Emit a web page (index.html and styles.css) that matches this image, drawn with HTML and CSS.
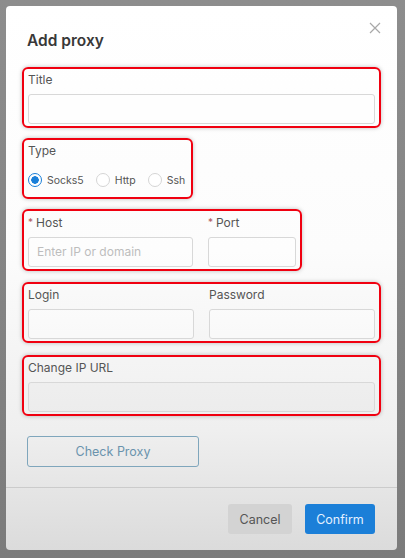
FILE: index.html
```html
<!DOCTYPE html>
<html lang="en">
<head>
    <meta charset="UTF-8">
    <meta name="viewport" content="width=device-width, initial-scale=1.0">
    <title>Add proxy</title>
    <link rel="stylesheet" href="styles.css">
</head>
<body>
    <div class="modal">
        <button class="modal-close" aria-label="Close">
            <svg width="12" height="12" viewBox="0 0 12 12">
                <path d="M1 1 L11 11 M11 1 L1 11" stroke="#a8a8a8" stroke-width="1.2" fill="none"/>
            </svg>
        </button>

        <div class="modal-header">Add proxy</div>

        <div class="modal-body">
            <div class="mark mark-full">
                <div class="field-label">Title</div>
                <div class="input"></div>
            </div>

            <div class="mark mark-type">
                <div class="field-label">Type</div>
                <div class="radio-group">
                    <span class="radio checked"><span class="radio-dot"></span>Socks5</span>
                    <span class="radio"><span class="radio-dot"></span>Http</span>
                    <span class="radio"><span class="radio-dot"></span>Ssh</span>
                </div>
            </div>

            <div class="mark mark-host">
                <div class="field">
                    <div class="field-label"><span class="req">*</span>Host</div>
                    <div class="input input-host placeholder">Enter IP or domain</div>
                </div>
                <div class="field">
                    <div class="field-label"><span class="req">*</span>Port</div>
                    <div class="input input-port"></div>
                </div>
            </div>

            <div class="mark mark-full mark-cols">
                <div class="field">
                    <div class="field-label">Login</div>
                    <div class="input"></div>
                </div>
                <div class="field">
                    <div class="field-label">Password</div>
                    <div class="input"></div>
                </div>
            </div>

            <div class="mark mark-full">
                <div class="field-label">Change IP URL</div>
                <div class="input input-muted"></div>
            </div>

            <button class="btn-check">Check Proxy</button>
        </div>

        <div class="modal-footer">
            <button class="btn btn-cancel">Cancel</button>
            <button class="btn btn-confirm">Confirm</button>
        </div>
    </div>
</body>
</html>
```

FILE: styles.css
```css
body {
    margin: 0;
    padding: 6px 8px 8px 6px;
    height: 558px;
    box-sizing: border-box;
    background: linear-gradient(#8d8d8d, #7b7b7b);
    font-family: Inter, "Noto Sans", sans-serif;
    color: #555;
}

.modal {
    position: relative;
    width: 391px;
    height: 544px;
    display: flex;
    flex-direction: column;
    background: linear-gradient(#ffffff 0%, #fcfcfc 45%, #efefef 78%, #dbdbdb 100%);
    border-radius: 4px;
}

.modal-close {
    position: absolute;
    top: 16px;
    right: 16px;
    padding: 0;
    border: none;
    background: none;
    line-height: 0;
}

.modal-header {
    padding: 24px 21px 0;
    font-size: 15.5px;
    line-height: 22px;
    font-weight: 600;
    color: #383838;
}

.modal-body {
    flex: 1;
    display: flex;
    flex-direction: column;
    align-items: flex-start;
    padding: 15px 16px 0;
}

.mark {
    border: 2px solid #f00010;
    border-radius: 6px;
    padding: 2px 4px;
    box-shadow: 0 0 4px rgba(0,0,0,0.25);
    margin-bottom: 10px;
}

.mark-full {
    align-self: stretch;
}

.mark-type {
    width: 159px;
}

.mark-host {
    display: flex;
    gap: 15px;
    margin-bottom: 11px;
}

.mark-cols {
    display: grid;
    grid-template-columns: 1fr 1fr;
    gap: 15px;
    margin-bottom: 12px;
}

.field-label {
    font-size: 12px;
    line-height: 18px;
    margin-bottom: 5px;
    color: #555;
}

.req {
    color: #b05a5a;
    font-size: 10px;
    margin-right: 3px;
    vertical-align: 1px;
}

.input {
    height: 30px;
    box-sizing: border-box;
    border: 1px solid #d8d8d8;
    border-radius: 3px;
    background: rgba(255,255,255,0.4);
}

.input-host {
    width: 165px;
}

.input-port {
    width: 88px;
}

.input-muted {
    background: rgba(0,0,0,0.015);
}

.placeholder {
    padding-left: 8px;
    font-size: 12px;
    line-height: 28px;
    color: #bdbdbd;
}

.radio-group {
    display: flex;
    height: 30px;
    align-items: center;
    font-size: 10.5px;
    color: #555;
}

.radio {
    display: flex;
    align-items: center;
    margin-right: 12px;
}

.radio:last-child {
    margin-right: 0;
}

.radio-dot {
    width: 12px;
    height: 12px;
    border: 1px solid #d5d5d5;
    border-radius: 50%;
    margin-right: 5px;
    background: #fff;
    box-sizing: content-box;
}

.radio.checked .radio-dot {
    border-color: #1a7fd8;
    background: radial-gradient(circle, #1a7fd8 0 3.5px, #fff 4px);
}

.btn-check {
    margin-top: 10px;
    margin-left: 5px;
    width: 172px;
    height: 31px;
    border: 1px solid #7fa6bc;
    border-radius: 3px;
    background: transparent;
    color: #6a93ad;
    font-family: Inter, "Noto Sans", sans-serif;
    font-size: 12.5px;
}

.modal-footer {
    display: flex;
    justify-content: flex-end;
    gap: 13px;
    padding: 16px 22px 16px;
    border-top: 1px solid #cbcbcb;
}

.btn {
    height: 30px;
    border: none;
    border-radius: 3px;
    font-family: Inter, "Noto Sans", sans-serif;
    font-size: 12.5px;
}

.btn-cancel {
    width: 64px;
    background: #d3d3d3;
    color: #555;
}

.btn-confirm {
    width: 70px;
    background: #1b7fd8;
    color: #e4f1ff;
}
```
